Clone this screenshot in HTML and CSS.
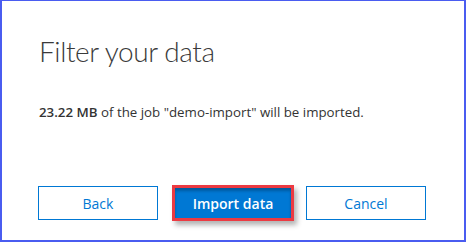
FILE: index.html
```html
<!DOCTYPE html>
<html>
<head>
<meta charset="utf-8">
<link rel="stylesheet" href="styles.css">
</head>
<body>
<div class="dialog">
  <h1 class="title">Filter your data</h1>
  <p class="desc"><strong>23.22 MB</strong> of the job "demo-import" will be imported.</p>
  <div class="actions">
    <button class="btn btn-outline">Back</button>
    <button class="btn btn-primary">Import data</button>
    <button class="btn btn-outline">Cancel</button>
  </div>
</div>
</body>
</html>
```
FILE: styles.css
```css
html, body {
  margin: 0;
  padding: 0;
  background: #ffffff;
}
.dialog {
  box-sizing: border-box;
  width: 466px;
  height: 242px;
  border-top: 1px solid #4a5cf0;
  border-left: 2px solid #4a5cf0;
  border-right: 2px solid #4a5cf0;
  border-bottom: 2px solid #4a5cf0;
  padding: 30px 0 0 36px;
  font-family: "Open Sans", sans-serif;
  color: #333;
}
.title {
  margin: 0 0 0 1px;
  font-family: Lato, sans-serif;
  font-weight: 300;
  font-size: 28px;
  letter-spacing: -0.4px;
  line-height: 40px;
  color: #3a3a3a;
}
.desc {
  margin: 31px 0 0 1px;
  font-size: 13.3px;
  line-height: 20px;
  color: #333;
}
.desc strong {
  font-weight: 600;
}
.actions {
  display: flex;
  align-items: center;
  margin-top: 63px;
}
.btn {
  box-sizing: border-box;
  width: 120px;
  height: 34px;
  font-family: "Open Sans", sans-serif;
  font-size: 14px;
  padding: 0;
  margin: 0;
}
.btn-outline {
  background: #fff;
  border: 1px solid #0078d4;
  color: #0078d4;
}
.btn-primary {
  width: 122px;
  height: 36px;
  margin: 0 12px 0 14px;
  background: #0078d4;
  border: 3px solid #ec3a42;
  color: #fff;
  font-weight: 600;
  box-shadow: inset 0 3px 3px rgba(0,0,0,0.25), 3px 4px 5px rgba(0,0,0,0.3);
}
```
